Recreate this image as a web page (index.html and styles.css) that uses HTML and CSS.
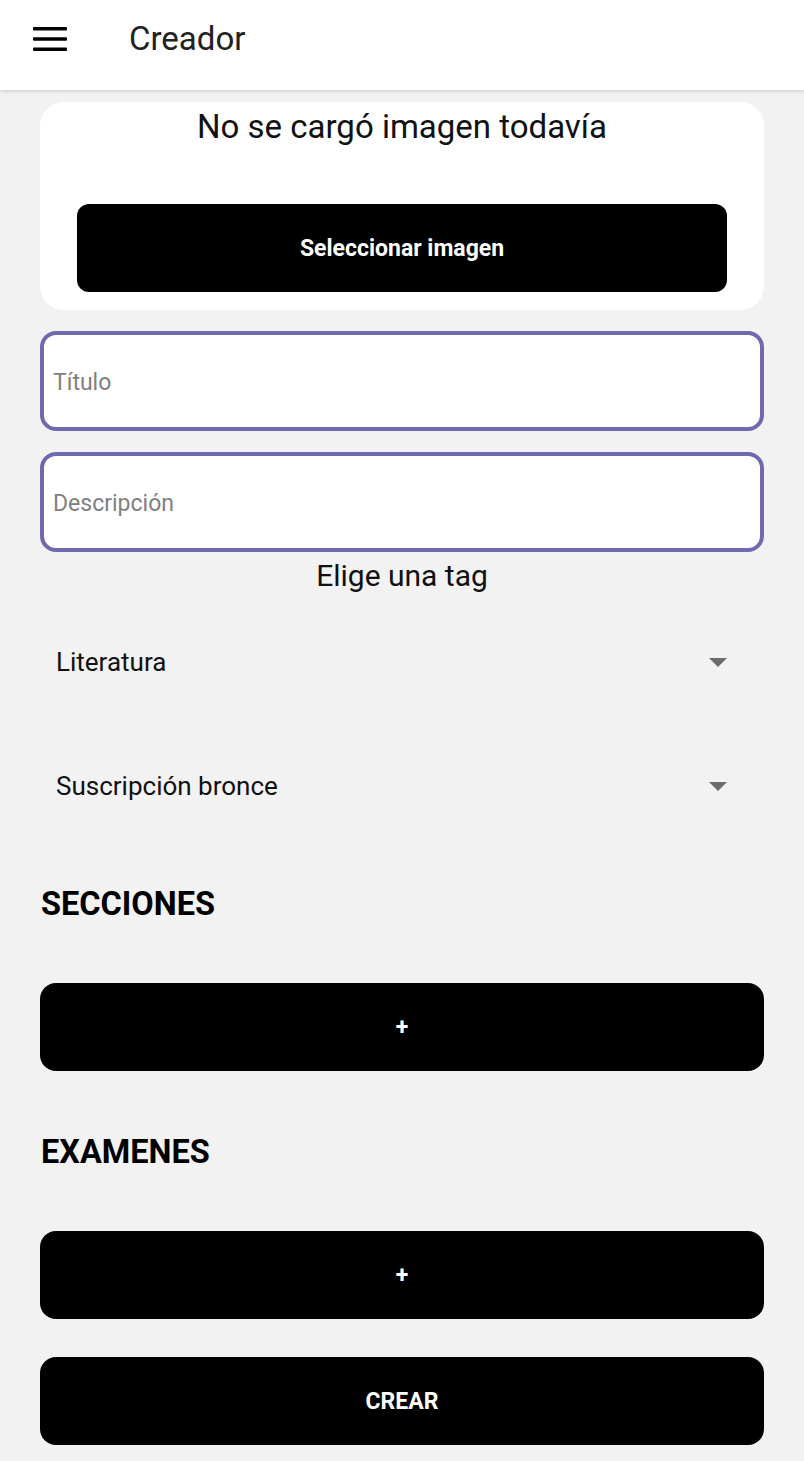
FILE: index.html
```html
<!DOCTYPE html>
<html lang="es">
<head>
<meta charset="utf-8">
<title>Creador</title>
<link rel="stylesheet" href="styles.css">
</head>
<body>
<header class="appbar">
  <svg class="menu-icon" width="34" height="24" viewBox="0 0 34 24">
    <rect x="0" y="0" width="34" height="3.4" rx="1" fill="#000"/>
    <rect x="0" y="10.3" width="34" height="3.4" rx="1" fill="#000"/>
    <rect x="0" y="20.6" width="34" height="3.4" rx="1" fill="#000"/>
  </svg>
  <h1 class="appbar-title">Creador</h1>
</header>
<main class="content">
  <section class="image-card">
    <p class="image-card-text">No se cargó imagen todavía</p>
    <button class="btn btn-inner">Seleccionar imagen</button>
  </section>
  <div class="field"><span class="placeholder">Título</span></div>
  <div class="field"><span class="placeholder">Descripción</span></div>
  <p class="tag-label">Elige una tag</p>
  <div class="select"><span>Literatura</span><span class="caret"></span></div>
  <div class="select"><span>Suscripción bronce</span><span class="caret"></span></div>
  <h2 class="section-title first">SECCIONES</h2>
  <button class="btn btn-add">+</button>
  <h2 class="section-title">EXAMENES</h2>
  <button class="btn btn-add">+</button>
  <button class="btn btn-create">CREAR</button>
</main>
</body>
</html>
```
FILE: styles.css
```css
* { box-sizing: border-box; }
html, body { margin: 0; padding: 0; }
body {
  background: #f2f2f2;
  font-family: Roboto, "Noto Sans", sans-serif;
  color: #000;
  width: 804px;
  min-height: 1461px;
}
.appbar {
  height: 90px;
  background: #fff;
  display: flex;
  align-items: center;
  padding-left: 33px;
  padding-bottom: 13px;
  box-shadow: 0 1px 4px rgba(0,0,0,0.18);
  position: relative;
  z-index: 1;
}
.menu-icon { display: block; }
.appbar-title {
  margin: 0 0 0 62px;
  font-size: 33px;
  line-height: 40px;
  font-weight: 400;
  color: #212121;
}
.content {
  padding: 12px 40px 0;
  display: flex;
  flex-direction: column;
}
.image-card {
  background: #fff;
  border-radius: 24px;
  height: 208px;
  padding: 6px 37px 0;
  display: flex;
  flex-direction: column;
  align-items: stretch;
}
.image-card-text {
  margin: 0;
  text-align: center;
  font-size: 33px;
  line-height: 38px;
  color: #111;
}
.btn {
  border: none;
  background: #000;
  color: #fff;
  font-family: Roboto, "Noto Sans", sans-serif;
  font-weight: 700;
  border-radius: 14px;
  height: 88px;
  display: flex;
  align-items: center;
  justify-content: center;
  padding: 0;
  width: 100%;
}
.btn-inner {
  margin-top: 58px;
  font-size: 23px;
  border-radius: 12px;
}
.field {
  margin-top: 21px;
  height: 100px;
  background: #fff;
  border: 4px solid #6f6aad;
  border-radius: 16px;
  display: flex;
  align-items: center;
  padding-left: 9px;
}
.placeholder {
  font-size: 23px;
  color: #808080;
  margin-top: 2px;
}
.tag-label {
  margin: 0;
  height: 48px;
  line-height: 48px;
  text-align: center;
  font-size: 30px;
  color: #111;
}
.select {
  height: 124px;
  display: flex;
  align-items: center;
  justify-content: space-between;
  padding: 0 37px 0 16px;
  font-size: 26px;
  color: #111;
}
.caret {
  width: 0;
  height: 0;
  border-left: 9px solid transparent;
  border-right: 9px solid transparent;
  border-top: 9px solid #6b6b6b;
}
.section-title {
  margin: 61px 0 0 1px;
  height: 40px;
  line-height: 40px;
  font-size: 32.5px;
  font-weight: 700;
}
.section-title.first { margin-top: 36px; }
.btn-add {
  margin-top: 59px;
  font-size: 23px;
  border-radius: 16px;
}
.btn-create {
  margin-top: 38px;
  font-size: 23px;
  border-radius: 16px;
}
```
